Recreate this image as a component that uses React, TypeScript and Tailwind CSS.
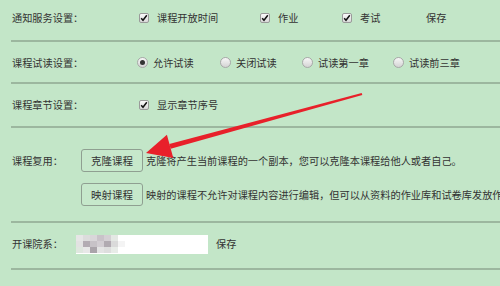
import React from 'react';

const font = { fontFamily: '"Noto Sans CJK SC", "Noto Sans", sans-serif' };

function Check({ label, className }: { label: string; className: string }) {
  return (
    <div className={`flex shrink-0 items-center ${className}`}>
      <span className="flex h-[10px] w-[10px] items-center justify-center rounded-[2px] border border-[#9a9a9a] bg-gradient-to-b from-[#fbfbfb] to-[#d9d9d9]">
        <svg width="8" height="8" viewBox="0 0 8 8">
          <path d="M1.2 4.2 L3 6.2 L6.8 1.2" fill="none" stroke="#111" strokeWidth="1.5" />
        </svg>
      </span>
      <span className="ml-[8px]">{label}</span>
    </div>
  );
}

function Radio({ label, on, className }: { label: string; on?: boolean; className: string }) {
  return (
    <div className={`flex shrink-0 items-center ${className}`}>
      <span className="flex h-[11px] w-[11px] items-center justify-center rounded-full border border-[#a8a8a8] bg-gradient-to-b from-[#f7f7f7] to-[#d4d4d4]">
        {on && <span className="h-[5px] w-[5px] rounded-full bg-[#333]" />}
      </span>
      <span className="ml-[5px]">{label}</span>
    </div>
  );
}

const blur = [
  ['#e6e6e6', '#dcdcdc', '#d9d6d9', '#c9c3c9', '#d4d0d4', '#e4e8e4', '#ffffff', '#ffffff'],
  ['#e2e2e2', '#b3acb3', '#c7c2c7', '#d2cdd2', '#b1aab1', '#dadada', '#f4f4f4', '#ffffff'],
  ['#dfe7df', '#e8e8e8', '#aaa4aa', '#e4e4e4', '#dedede', '#e8ece8', '#ffffff', '#ffffff'],
];

export default function App() {
  return (
    <div className="relative h-[286px] w-[500px] overflow-hidden bg-[#c3e6c8] text-[10.2px] text-[#333]" style={font}>
      <div className="pl-[11px]">
        <div className="flex h-[42px] items-center border-b-2 border-[#9cb79f] pb-[4px] pl-[1px]">
          <div className="w-[127px] shrink-0">通知服务设置：</div>
          <Check label="课程开放时间" className="w-[121px]" />
          <Check label="作业" className="w-[82px]" />
          <Check label="考试" className="w-[84px]" />
          <div>保存</div>
        </div>

        <div className="flex h-[42px] items-center border-b-2 border-[#9cb79f] pt-[2px] pl-[1px]">
          <div className="w-[125px] shrink-0">课程试读设置：</div>
          <Radio label="允许试读" on className="w-[83px]" />
          <Radio label="关闭试读" className="w-[82px]" />
          <Radio label="试读第一章" className="w-[91px]" />
          <Radio label="试读前三章" className="" />
        </div>

        <div className="flex h-[44px] items-center border-b-2 border-[#9cb79f] pl-[1px]">
          <div className="w-[127px] shrink-0">课程章节设置：</div>
          <Check label="显示章节序号" className="" />
        </div>

        <div className="flex h-[95px] items-start overflow-hidden border-b-2 border-[#9cb79f] pt-[21px] pl-[1px]">
          <div className="w-[69px] shrink-0 whitespace-nowrap pt-[4px]">课程复用：</div>
          <div className="flex min-w-0 flex-col gap-[11px]">
            <div className="flex items-center whitespace-nowrap">
              <button className="h-[23px] w-[62px] shrink-0 rounded-[3px] border border-[#8f9f91] bg-[#c6e8cb] text-[10.5px] text-[#333]">
                克隆课程
              </button>
              <span className="ml-[3px]">克隆将产生当前课程的一个副本，您可以克隆本课程给他人或者自己。</span>
            </div>
            <div className="flex items-center whitespace-nowrap">
              <button className="h-[23px] w-[62px] shrink-0 rounded-[3px] border border-[#8f9f91] bg-[#c6e8cb] text-[10.5px] text-[#333]">
                映射课程
              </button>
              <span className="ml-[3px]">映射的课程不允许对课程内容进行编辑，但可以从资料的作业库和试卷库发放作</span>
            </div>
          </div>
        </div>

        <div className="flex h-[47px] items-center border-b-2 border-[#9cb79f] pb-[3px] pl-[1px]">
          <div className="w-[64px] shrink-0">开课院系：</div>
          <div className="flex h-[19px] w-[132px] items-center bg-white">
            <div className="flex flex-col">
              {blur.map((row, i) => (
                <div key={i} className="flex">
                  {row.map((c, j) => (
                    <span key={j} className="h-[6px] w-[7px]" style={{ background: c }} />
                  ))}
                </div>
              ))}
            </div>
          </div>
          <div className="ml-[8px]">保存</div>
        </div>
      </div>

      <svg className="pointer-events-none absolute left-0 top-0" width="500" height="286" viewBox="0 0 500 286">
        <polygon points="362.3,95 361.7,93 169.3,144 170.7,148.8" fill="#e8202a" />
        <polygon points="146,153 166.9,134.8 173.3,158" fill="#e8202a" />
      </svg>
    </div>
  );
}
